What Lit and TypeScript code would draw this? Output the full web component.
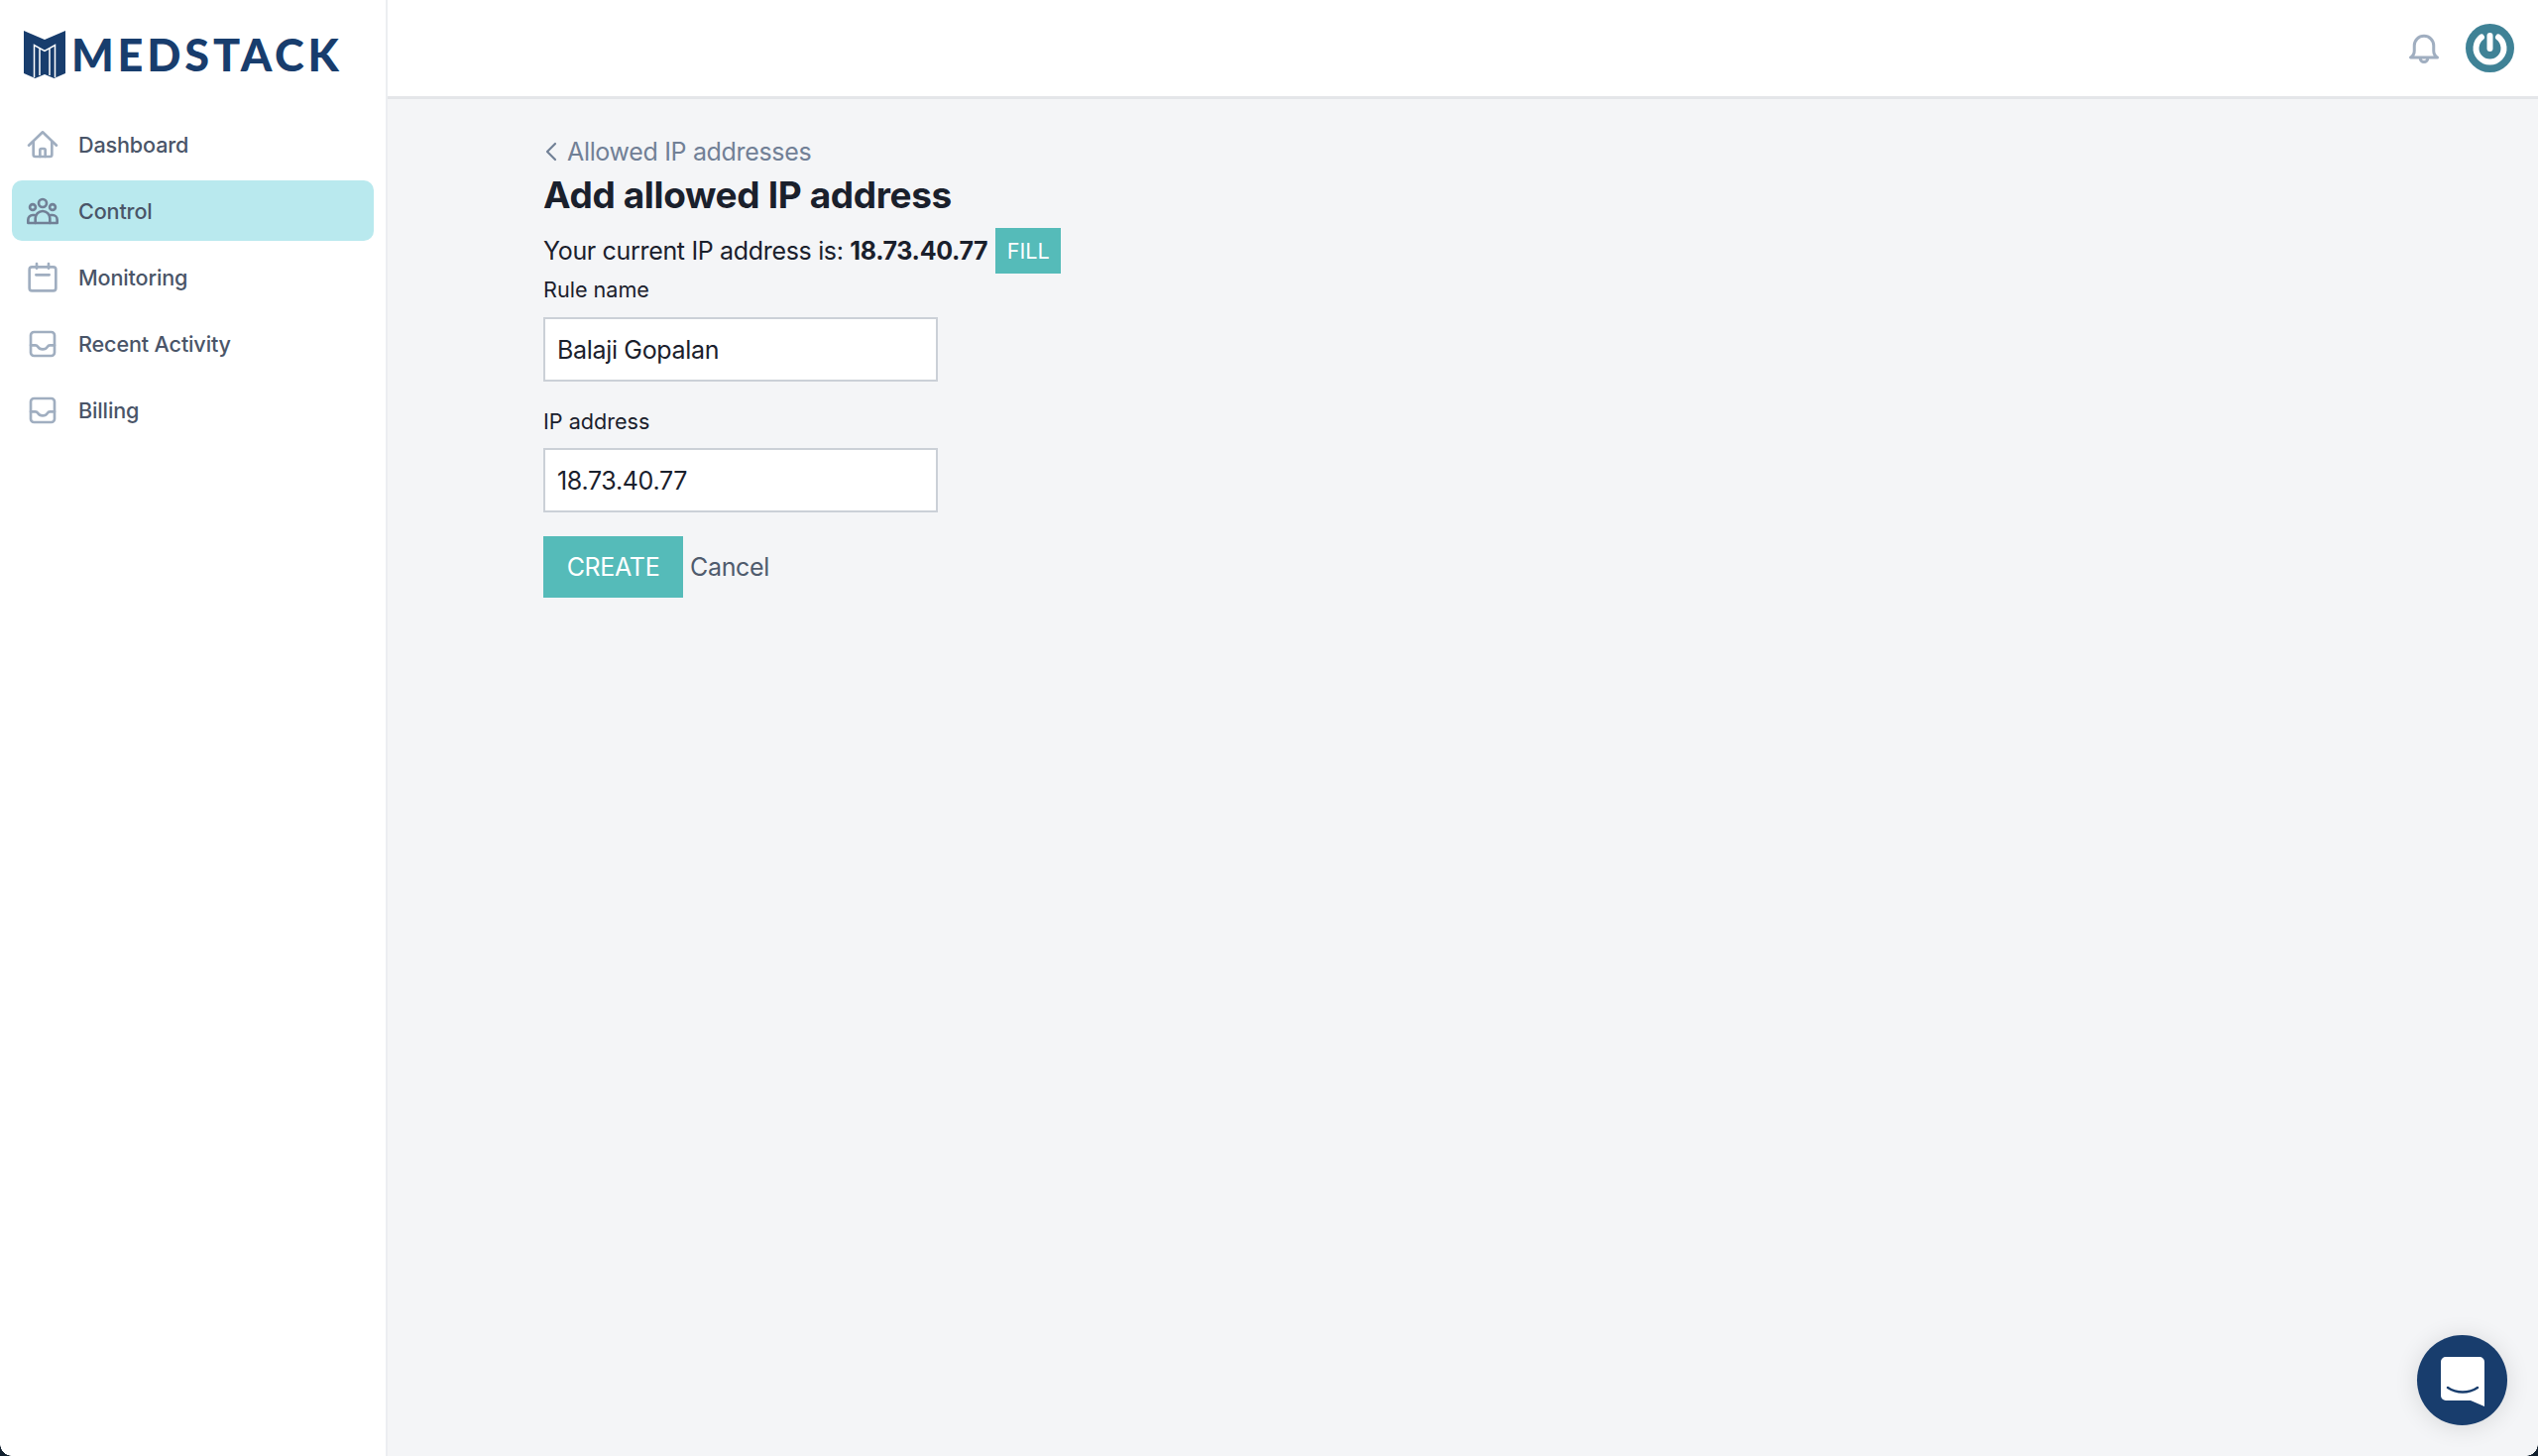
import { LitElement, html, css, svg } from "lit";
import { customElement } from "lit/decorators.js";

const icon = (body: unknown) => html`<svg class="nav-icon" viewBox="0 0 24 24" fill="none" stroke="currentColor" stroke-width="2" stroke-linecap="round" stroke-linejoin="round">${body}</svg>`;

const inbox = svg`<rect x="3" y="3" width="18" height="18" rx="2.5"/><path d="M3 13h3.5c1 0 1.5.5 2 1.3.6 1 1.5 1.7 3.5 1.7s2.9-.7 3.5-1.7c.5-.8 1-1.3 2-1.3H21"/>`;
const items = [
  { label: "Dashboard", icon: svg`<path d="M1.500 12.500 12 2.500l10.500 10"/><path d="M5 10v9.500A1.500 1.500 0 0 0 6.500 21h11a1.500 1.500 0 0 0 1.500-1.500V10"/><path d="M10 21v-5a1 1 0 0 1 1-1h2a1 1 0 0 1 1 1v5"/>` },
  { label: "Control", active: true, icon: svg`<circle cx="12" cy="6" r="3"/><circle cx="4.500" cy="9" r="2.200"/><circle cx="19.500" cy="9" r="2.200"/><path d="M6.500 21v-3.500a5.500 5.500 0 0 1 11 0V21"/><path d="M1 21v-2.500A3.500 3.500 0 0 1 4.500 15H6M23 21v-2.500a3.500 3.500 0 0 0-3.500-3.500H18M1 21h22"/>` },
  { label: "Monitoring", icon: svg`<rect x="2" y="4" width="20" height="18" rx="2"/><path d="M7.500 1.500V5M16.500 1.500V5M7 10h10"/>` },
  { label: "Recent Activity", icon: inbox },
  { label: "Billing", icon: inbox },
];

@customElement("app-root")
export class AppRoot extends LitElement {
  static styles = css`
    :host { display: block; position: relative; height: 1469px; overflow: hidden; font-family: Inter, "Liberation Sans", sans-serif; color: #1a202c; background: #f4f5f7; }
    .shell { display: flex; height: 100%; }
    .sidebar { width: 391px; flex: none; background: #fff; border-right: 2px solid #eceef1; box-sizing: border-box; display: flex; flex-direction: column; }
    .logo { height: 110px; display: flex; align-items: flex-start; gap: 6px; padding: 30px 0 0 24px; box-sizing: border-box; }
    .logo svg { width: 42px; height: 50px; flex: none; }
    .wordmark { font-family: Lato, sans-serif; font-weight: 900; font-size: 45px; line-height: 50px; letter-spacing: 3.800px; color: #183d6d; }
    nav { display: flex; flex-direction: column; gap: 6px; padding: 5px 12px 0; }
    .item { height: 61px; display: flex; align-items: center; gap: 20px; padding: 0 15px; border-radius: 10px; font-size: 21.600px; letter-spacing: -0.15px; font-weight: 500; color: #4a5568; }
    .item.active { background: #b9e9ee; }
    .nav-icon { width: 32px; height: 32px; flex: none; color: #a0aec0; }
    .active .nav-icon { color: #718096; }
    .content { flex: 1; min-width: 0; display: flex; flex-direction: column; }
    header { height: 100px; flex: none; background: #fff; border-bottom: 3px solid #e4e6e9; box-sizing: border-box; display: flex; align-items: center; justify-content: flex-end; gap: 24px; padding: 0 24px 0 0; }
    .bell { width: 36px; height: 36px; color: #a0aec0; }
    .power { width: 49px; height: 49px; }
    main { padding: 36px 0 0 157px; display: flex; flex-direction: column; align-items: flex-start; }
    .back { display: flex; align-items: center; gap: 6px; font-size: 25px; letter-spacing: -0.33px; line-height: 34px; color: #718096; }
    .back svg { width: 18px; height: 24px; }
    h1 { margin: 2px 0 0; font-size: 37px; letter-spacing: -0.36px; line-height: 50px; font-weight: 700; color: #1a202c; }
    .current { display: flex; align-items: center; gap: 8px; margin-top: 8px; font-size: 25px; letter-spacing: -0.33px; line-height: 46px; }
    .current b { font-weight: 700; }
    .fill { height: 46px; width: 66px; display: flex; align-items: center; justify-content: center; background: #55bbb9; color: #fff; font-size: 21.600px; letter-spacing: 0; }
    label { display: block; font-size: 21.600px; line-height: 32px; font-weight: 400; }
    .rule-label { line-height: 33px; }
    .input { margin-top: 11px; width: 398px; height: 65px; box-sizing: border-box; display: flex; align-items: center; padding: 0 12px; background: #fff; border: 2px solid #cbd0d7; font-size: 25px; letter-spacing: -0.33px; color: #1a202c; }
    .ip-label { margin-top: 24px; }
    .actions { display: flex; align-items: center; gap: 7px; margin-top: 24px; }
    .create { width: 141px; height: 62px; display: flex; align-items: center; justify-content: center; background: #55bbb9; color: #fff; font-size: 25px; letter-spacing: -0.33px; }
    .cancel { font-size: 25px; letter-spacing: -0.33px; color: #4f5b6d; }
    .chat { position: absolute; left: 2438px; top: 1347px; width: 91px; height: 91px; border-radius: 50%; background: #183d6d; box-shadow: 0 2px 24px rgba(0,0,0,.12); display: flex; align-items: center; justify-content: center; }
    .chat svg { width: 44px; height: 50px; margin-top: 3px; }
    .corner { position: absolute; bottom: 0; width: 12px; height: 12px; }
    .corner.l { left: 0; background: radial-gradient(circle at 100% 0, transparent 11.500px, #12202e 12px); }
    .corner.r { right: 0; background: radial-gradient(circle at 0 0, transparent 11.500px, #12202e 12px); }
  `;

  render() {
    return html`
      <div class="shell">
        <aside class="sidebar">
          <div class="logo">
            <svg viewBox="0 0 42 50"><path fill="#183d6d" d="M0 1 21 10 42 1V44L30.500 49 21 45 11.500 49 0 44Z"/><path d="M10.500 48V15.500L21 21.500 31.500 15.500V48M16 46V19M26 46V19" fill="none" stroke="#fff" stroke-width="1.500"/></svg>
            <span class="wordmark">MEDSTACK</span>
          </div>
          <nav>
            ${items.map((i) => html`<div class="item ${i.active ? "active" : ""}">${icon(i.icon)}<span>${i.label}</span></div>`)}
          </nav>
        </aside>
        <div class="content">
          <header>
            <svg class="bell" viewBox="0 0 24 24" fill="none" stroke="currentColor" stroke-width="2" stroke-linecap="round" stroke-linejoin="round"><path d="M3 18h18c-1.500-1-2.500-2-2.500-4.500V10a6.500 6.500 0 0 0-13 0v3.500C5.500 16 4.500 17 3 18Z"/><path d="M9.500 18.500a2.500 2.500 0 0 0 5 0"/></svg>
            <svg class="power" viewBox="0 0 49 49"><circle cx="24.500" cy="24.500" r="24.500" fill="#3f8296"/><path d="M16 13.500a14 14 0 1 0 17 0" fill="none" stroke="#fff" stroke-width="6" stroke-linecap="round"/><path d="M24.500 12v13" stroke="#fff" stroke-width="6" stroke-linecap="round"/></svg>
          </header>
          <main>
            <div class="back"><svg viewBox="0 0 18 24" fill="none" stroke="#718096" stroke-width="2.200" stroke-linecap="round" stroke-linejoin="round"><path d="M12 4 4 12l8 8"/></svg><span>Allowed IP addresses</span></div>
            <h1>Add allowed IP address</h1>
            <div class="current"><span>Your current IP address is: <b>18.73.40.77</b></span><span class="fill">FILL</span></div>
            <label class="rule-label">Rule name</label>
            <div class="input">Balaji Gopalan</div>
            <label class="ip-label">IP address</label>
            <div class="input">18.73.40.77</div>
            <div class="actions"><span class="create">CREATE</span><span class="cancel">Cancel</span></div>
          </main>
        </div>
      </div>
      <div class="chat"><svg viewBox="0 0 44 50"><path fill="#fff" d="M5 0h34a5 5 0 0 1 5 5v45l-14-6H5a5 5 0 0 1-5-5V5a5 5 0 0 1 5-5Z"/><path d="M7 31c9 6 21 6 30 0" fill="none" stroke="#183d6d" stroke-width="2.500" stroke-linecap="round"/></svg></div>
      <div class="corner l"></div><div class="corner r"></div>
    `;
  }
}
